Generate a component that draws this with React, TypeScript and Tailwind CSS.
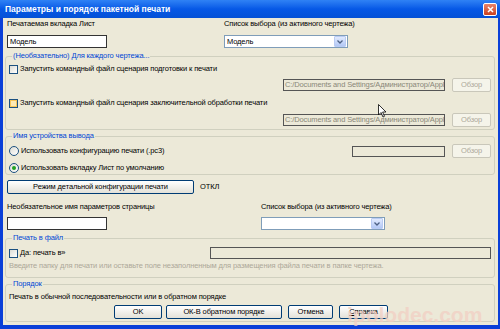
import React from 'react';

const font = { fontFamily: '"Liberation Sans", Arial, sans-serif' };

function Checkbox({ hover }: { hover?: boolean }) {
  return (
    <span className="flex h-[9px] w-[9px] shrink-0 items-center justify-center border border-[#1c5180] bg-gradient-to-br from-[#dcdcd5] to-white">
      {hover && <span className="h-[7px] w-[7px] border border-[#f9c65a] bg-[#fde9b5]" />}
    </span>
  );
}

function Radio({ checked }: { checked?: boolean }) {
  return (
    <span className="flex h-[10px] w-[10px] shrink-0 items-center justify-center rounded-full border border-[#1c5180] bg-gradient-to-br from-[#dcdcd5] to-white">
      {checked && <span className="h-[4px] w-[4px] rounded-full bg-[#21a121]" />}
    </span>
  );
}

function XpButton({ children, className = '', disabled }: { children: React.ReactNode; className?: string; disabled?: boolean }) {
  return (
    <div
      className={
        'flex h-[14px] items-center justify-center rounded-[2px] border ' +
        (disabled
          ? 'border-[#c9c7ba] bg-[#f5f4ea] text-[#aca899] '
          : 'border-[#003c74] bg-gradient-to-b from-white to-[#e3e1d8] text-black ') +
        className
      }
    >
      {children}
    </div>
  );
}

function Select({ className = '', value }: { className?: string; value?: string }) {
  return (
    <div className={'flex h-[13px] items-center border border-[#7f9db9] bg-white pl-[2px] ' + className}>
      <span className="flex-1 truncate">{value}</span>
      <span className="mr-[1px] flex h-[11px] w-[12px] items-center justify-center rounded-[1px] border border-[#b9cbf3] bg-gradient-to-b from-[#e1eafe] to-[#b3c8f5]">
        <svg width="6" height="4" viewBox="0 0 6 4">
          <path d="M0.5 0.5 L3 3 L5.5 0.5" stroke="#4d6185" strokeWidth="1.3" fill="none" />
        </svg>
      </span>
    </div>
  );
}

function Group({ title, children, className = '' }: { title: string; children: React.ReactNode; className?: string }) {
  return (
    <fieldset className={'ml-[2px] mr-[3px] rounded-[3px] border border-[#d0d0bf] px-[3px] ' + className}>
      <legend className="ml-[3px] px-[1px] leading-[10px] text-[#0046d5]">{title}</legend>
      {children}
    </fieldset>
  );
}

function PathRow({ value, inputClass }: { value: string; inputClass: string }) {
  return (
    <div className="flex h-[14px] items-center justify-end">
      <div className={'flex h-[12px] items-center overflow-hidden whitespace-nowrap border border-[#555] bg-[#ece9d8] pl-[1px] text-[#8a8878] ' + inputClass}>
        {value}
      </div>
      <XpButton disabled className="ml-[7px] w-[39px]">Обзор</XpButton>
    </div>
  );
}

export default function App() {
  const path = 'C:/Documents and Settings/Администратор/Appli';
  return (
    <div className="flex h-[329px] w-[500px] flex-col overflow-hidden bg-[#0a3fd8] text-[7.5px] tracking-[-0.12px] text-black" style={font}>
      <div className="flex h-[18px] shrink-0 items-center bg-gradient-to-b from-[#2f82f5] via-[#0658e6] to-[#0451d6] pl-[5px] pr-[3px]">
        <span className="flex-1 text-[8.5px] font-bold tracking-normal text-white">Параметры и порядок пакетной печати</span>
        <span className="flex h-[13px] w-[14px] items-center justify-center rounded-[2px] border border-white bg-gradient-to-b from-[#e8836a] to-[#c9401d]">
          <svg width="7" height="7" viewBox="0 0 7 7">
            <path d="M1 1 L6 6 M6 1 L1 6" stroke="white" strokeWidth="1.5" />
          </svg>
        </span>
      </div>

      <div className="relative mb-[4px] ml-[3px] mr-[2px] flex-1 bg-[#ece9d8]">
        <div className="flex h-[12px] items-center">
          <span className="w-[221px] pl-[4px]">Печатаемая вкладка Лист</span>
          <span>Список выбора (из активного чертежа)</span>
        </div>
        <div className="mt-[5px] flex h-[13px] items-center">
          <div className="w-[221px] pl-[4px]">
            <div className="flex h-[13px] w-[100px] items-center border border-[#333] bg-white pl-[2px]">Модель</div>
          </div>
          <Select className="w-[124px]" value="Модель" />
        </div>

        <Group title="(Необязательно) Для каждого чертежа..." className="mt-[3px] pb-[2px]">
          <div className="mt-[3px] flex h-[10px] items-center gap-[2px]">
            <Checkbox />
            <span>Запустить командный файл сценария подготовки к печати</span>
          </div>
          <div className="mt-[4px]">
            <PathRow value={path} inputClass="w-[162px]" />
          </div>
          <div className="mt-[6px] flex h-[10px] items-center gap-[2px]">
            <Checkbox hover />
            <span>Запустить командный файл сценария заключительной обработки печати</span>
          </div>
          <div className="mt-[5px]">
            <PathRow value={path} inputClass="w-[162px]" />
          </div>
        </Group>

        <Group title="Имя устройства вывода" className="mt-[1px] pb-[1px]">
          <div className="mt-[3px] flex h-[14px] items-center">
            <Radio />
            <span className="ml-[2px] flex-1">Использовать конфигурацию печати (.pc3)</span>
            <div className="h-[11px] w-[93px] border border-[#555] bg-[#ece9d8]" />
            <XpButton disabled className="ml-[7px] w-[39px]">Обзор</XpButton>
          </div>
          <div className="mt-[5px] flex h-[10px] items-center gap-[2px]">
            <Radio checked />
            <span>Использовать вкладку Лист по умолчанию</span>
          </div>
        </Group>

        <div className="mt-[5px] flex h-[14px] items-center pl-[4px]">
          <XpButton className="w-[187px]">Режим детальной конфигурации печати</XpButton>
          <span className="ml-[6px]">ОТКЛ</span>
        </div>

        <div className="mt-[8px] flex h-[10px] items-center">
          <span className="w-[258px] pl-[4px]">Необязательное имя параметров страницы</span>
          <span>Список выбора (из активного чертежа)</span>
        </div>
        <div className="mt-[5px] flex h-[13px] items-center">
          <div className="w-[258px] pl-[4px]">
            <div className="h-[13px] w-[100px] border border-[#333] bg-white" />
          </div>
          <Select className="w-[124px]" />
        </div>

        <Group title="Печать в файл" className="mt-[3px] pb-[6px]">
          <div className="mt-[4px] flex h-[12px] items-center">
            <Checkbox />
            <span className="ml-[2px] flex-1">Да: печать в»</span>
            <div className="h-[12px] w-[281px] border border-[#555] bg-[#ece9d8]" />
          </div>
          <div className="mt-[2px] flex h-[10px] items-center whitespace-nowrap text-[#aca899]">
            Введите папку для печати или оставьте поле незаполненным для размещения файла печати в папке чертежа.
          </div>
        </Group>

        <Group title="Порядок" className="mt-[1px] pb-[2px]">
          <div className="mt-[3px] flex h-[10px] items-center">Печать в обычной последовательности или в обратном порядке</div>
          <div className="mt-[3px] flex h-[14px] items-center pl-[105px]">
            <XpButton className="w-[48px]">OK</XpButton>
            <XpButton className="ml-[4px] w-[116px]">ОК-В обратном порядке</XpButton>
            <XpButton className="ml-[6px] w-[45px]">Отмена</XpButton>
            <XpButton className="ml-[6px] w-[49px]">
              <span className="underline">С</span>правка
            </XpButton>
          </div>
        </Group>

        <span className="pointer-events-none absolute left-[344px] top-[286px] text-[21px] font-bold leading-none tracking-normal text-[#f2cfc3] opacity-75">
          ipolodec.com
        </span>
        <svg className="absolute left-[375px] top-[86px]" width="9" height="14" viewBox="0 0 9 14">
          <path d="M0.5 0.5 L0.5 11 L3 8.5 L5 13 L6.5 12.3 L4.6 8 L8 8 Z" fill="white" stroke="black" strokeWidth="0.8" />
        </svg>
      </div>
    </div>
  );
}
